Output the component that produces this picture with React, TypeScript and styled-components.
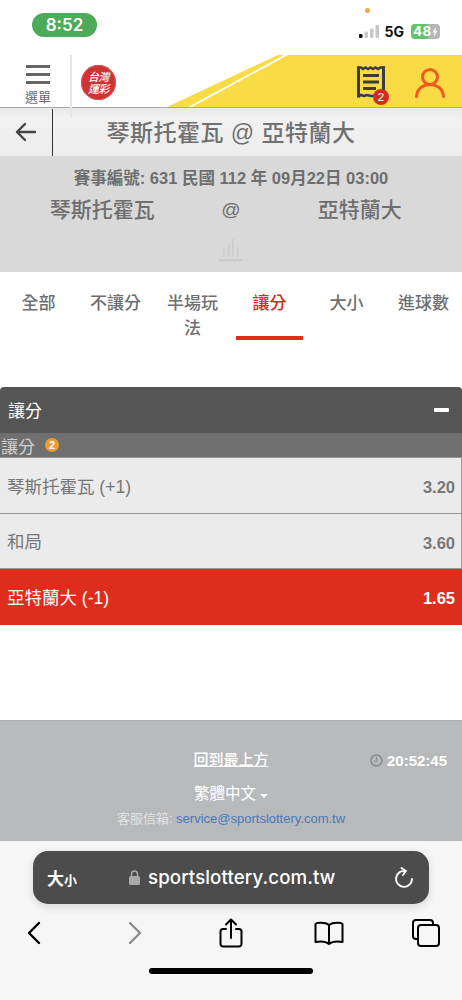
import React from "react";
import styled, { createGlobalStyle } from "styled-components";

const Global = createGlobalStyle`
  html, body { margin: 0; padding: 0; background: #fff; }
  * { box-sizing: border-box; }
  body { font-family: "Liberation Sans", "Noto Sans CJK TC", sans-serif; }
`;
const Page = styled.div`
  width: 462px; height: 1000px; overflow: hidden; display: flex; flex-direction: column; background: #fff;
`;
const StatusBar = styled.div`
  height: 55px; padding: 13px 22px 0 32px; display: flex; justify-content: space-between; align-items: flex-start;
`;
const TimePill = styled.div`
  width: 65px; height: 24px; border-radius: 12px; background: #4cab59; color: #fff;
  font: 600 17px/24px "Inter", sans-serif; text-align: center;
`;
const StatusRight = styled.div`
  position: relative; display: flex; align-items: center; gap: 6px; height: 34px; padding-top: 3px;
`;
const OrangeDot = styled.span`
  position: absolute; left: 6px; top: -5px; width: 5px; height: 5px; border-radius: 50%; background: #f3a544;
`;
const FiveG = styled.span`
  font: 700 14px/18px "Inter", sans-serif; color: #111; margin-right: 1px;
`;
const Battery = styled.div`
  width: 29px; height: 15px; border-radius: 4px; overflow: hidden; color: #fff; display: flex; align-items: center;
  font: 700 13.5px/15px "Inter", sans-serif; background: linear-gradient(90deg, #5fc46b 0 58%, #b5b5b5 58% 100%);
  padding-left: 2px; letter-spacing: 0.4px;
`;
const Header = styled.header`
  position: relative; height: 53px; display: flex; border-bottom: 1px solid #a9a9a9; background: #fff;
`;
const YellowBand = styled.svg`
  position: absolute; left: 0; top: 0; width: 462px; height: 52px;
`;
const MenuCell = styled.div`
  position: relative; width: 72px; height: 52px; flex: none; display: flex; flex-direction: column; align-items: center;
  padding: 10px 0 0 4px; color: #6c6c6c;
  &::after { content: ""; position: absolute; right: 0; top: 0; width: 2px; height: 63px; background: #e6e6e6; z-index: 3; }
`;
const Burger = styled.div`
  width: 24px; height: 19px; border-top: 3px solid #666; border-bottom: 3px solid #666; position: relative;
  &::before { content: ""; position: absolute; left: 0; right: 0; top: 5px; height: 3px; background: #666; }
`;
const MenuLabel = styled.span`
  font-size: 13px; line-height: 15px; margin-top: 6px;
`;
const LogoWrap = styled.div`
  position: relative; width: 35px; height: 35px; margin: 10px 0 0 9px; border-radius: 50%; background: #cf3232;
  color: #fff; font-size: 11px; line-height: 12px; font-weight: 500; font-style: italic; text-align: center;
  padding-top: 6px; letter-spacing: -0.5px; box-shadow: inset 0 0 0 1px #d95a5a;
`;
const HeaderIcons = styled.div`
  position: relative; margin-left: auto; display: flex; gap: 30px; padding: 11px 17px 0 0; align-items: flex-start;
`;
const BillWrap = styled.div`
  position: relative; width: 28px; height: 32px;
`;
const Badge = styled.span`
  position: absolute; right: -4px; bottom: -7px; width: 16px; height: 16px; border-radius: 50%; background: #d92a20;
  color: #fff; font: 400 11.5px/16px "Liberation Sans", sans-serif; text-align: center;
`;
const TitleBar = styled.div`
  height: 48px; display: flex; align-items: center; background: linear-gradient(#e9e9e9, #f1f1f1 20%, #ededed);
`;
const BackCell = styled.div`
  width: 53px; height: 47px; flex: none; border-right: 1.5px solid #333; display: flex; align-items: center; padding-left: 15px;
`;
const Title = styled.h1`
  margin: 2px 0 0 -53px; flex: 1; text-align: center; font-size: 23px; font-weight: 500; color: #707070; line-height: 46px;
  letter-spacing: 0.5px;
`;
const MatchInfo = styled.section`
  height: 116px; background: #d9d9d9; color: #6e6e6e; display: flex; flex-direction: column; align-items: center; padding-top: 12px;
`;
const MatchMeta = styled.div`
  font-size: 16.5px; font-weight: 700; line-height: 20px;
`;
const Teams = styled.div`
  width: 100%; padding: 0 38px; margin-top: 8px; display: grid; grid-template-columns: repeat(3, 1fr); text-align: center;
  font-size: 21px; font-weight: 500; line-height: 28px;
`;
const At = styled.span`
  font-size: 19px; font-weight: 400;
`;
const ChartIcon = styled.svg`
  margin-top: 14px;
`;
const Tabs = styled.nav`
  height: 115px; padding-top: 19px; display: grid; grid-template-columns: repeat(6, 77px); align-items: start;
`;
const Tab = styled.div<{ $active?: boolean }>`
  position: relative; height: 49px; padding: 0 8px; text-align: center; font-size: 17px; font-weight: 500; line-height: 25px;
  color: ${(p) => (p.$active ? "#d9281d" : "#6f6f6f")};
  ${(p) => p.$active && `&::after { content: ""; position: absolute; left: 5px; right: 5px; bottom: 0; height: 4px; background: #de2d1c; }`}
`;
const MarketHead = styled.div`
  height: 46px; background: #555; border-radius: 4px 4px 0 0; color: #fff; display: flex; justify-content: space-between;
  align-items: center; padding: 3px 13px 0 8px; font-size: 17px; line-height: 40px;
`;
const Minus = styled.span`
  width: 15px; height: 4px; border-radius: 1px; background: #fff; margin-top: -3px;
`;
const SubHead = styled.div`
  height: 25px; background: #6f6f6f; color: #d0d0d0; display: flex; align-items: center; padding-left: 1px; gap: 10px; font-size: 17px;
  border-bottom: 1px solid #999;
`;
const OrangeBadge = styled.span`
  width: 14px; height: 14px; border-radius: 50%; background: #ec9a34; color: #fff; font-size: 11px; font-weight: 700;
  line-height: 14px; text-align: center;
`;
const Row = styled.div<{ $selected?: boolean }>`
  height: 55.5px; display: flex; justify-content: space-between; align-items: center; padding: 0 6px 0 7px; font-size: 17.5px;
  background: ${(p) => (p.$selected ? "#de2d1c" : "#ebebeb")};
  color: ${(p) => (p.$selected ? "#fff" : "#777")};
  border-right: 1px solid ${(p) => (p.$selected ? "#de2d1c" : "#999")};
  border-bottom: 1px solid ${(p) => (p.$selected ? "#de2d1c" : "#999")};
`;
const Odds = styled.span`
  font-size: 16.5px; font-weight: 700; margin-top: 5px;
`;
const Spacer = styled.div`
  flex: 1;
`;
const Footer = styled.footer`
  height: 121px; background: #b8b9bb; border-top: 1px solid #b0b0b0; color: #fff; padding-top: 29px; display: flex; flex-direction: column; align-items: center;
`;
const FooterTop = styled.div`
  width: 100%; display: grid; grid-template-columns: 1fr auto 1fr; align-items: center; padding: 0 15px;
`;
const TopLink = styled.a`
  grid-column: 2; font-size: 15px; line-height: 20px; font-weight: 500; text-decoration: underline; color: #fff;
`;
const Clock = styled.div`
  justify-self: end; display: flex; align-items: center; gap: 4px; font-size: 15px; font-weight: 700;
`;
const LangRow = styled.div`
  margin-top: 13px; font-size: 15.5px; line-height: 22px; display: flex; align-items: center; gap: 4px;
`;
const Caret = styled.span`
  width: 0; height: 0; border-left: 4px solid transparent; border-right: 4px solid transparent; border-top: 4px solid #fff; margin-top: 3px;
`;
const Mail = styled.div`
  margin-top: 5px; font-size: 13px; line-height: 18px; color: #e2e2e2;
`;
const MailLink = styled.span`
  color: #4a7ab8;
`;
const Browser = styled.div`
  height: 159px; background: #f6f6f6; padding: 10px 33px 0; display: flex; flex-direction: column;
`;
const AddressBar = styled.div`
  height: 53px; flex: none; border-radius: 15px; background: #4c4c4c; color: #fff; display: flex; align-items: center;
  padding: 0 15px 0 14px; box-shadow: 0 3px 10px rgba(0,0,0,.12);
`;
const AA = styled.span`
  font-size: 17px; font-weight: 700; width: 82px;
  & small { font-size: 13px; }
`;
const Url = styled.span`
  flex: 1; display: flex; align-items: center; gap: 8px; font: 500 18.7px/24px "Inter", sans-serif; letter-spacing: 0.1px;
`;
const NavIcons = styled.div`
  margin: 13px -33px 0; height: 32px; padding-left: 26px; display: flex; align-items: center;
`;
const NavIcon = styled.svg<{ $gap: number }>`
  flex: none; margin-right: ${(p) => p.$gap}px;
`;
const HomeBar = styled.div`
  width: 164px; height: 6px; flex: none; align-self: center; margin-top: 19px; border-radius: 3px; background: #000;
`;

export default function App() {
  return (
    <Page>
      <Global />
      <StatusBar>
        <TimePill>8:52</TimePill>
        <StatusRight>
          <OrangeDot />
          <svg width="20" height="14" viewBox="0 0 20 14">
            <rect x="0" y="9" width="3.5" height="4" rx="1" fill="#111" />
            <rect x="5.5" y="6.5" width="3.5" height="6.5" rx="1" fill="#c8c8c8" />
            <rect x="11" y="3.5" width="3.5" height="9.5" rx="1" fill="#c8c8c8" />
            <rect x="16.5" y="0" width="3.5" height="13" rx="1" fill="#c8c8c8" />
          </svg>
          <FiveG>5G</FiveG>
          <Battery>
            48
            <svg width="6" height="10" viewBox="0 0 6 10" fill="#fff"><path d="M4 0 L0.5 5.5 H2.5 L1.8 10 L5.5 4 H3.5 Z" /></svg>
          </Battery>
        </StatusRight>
      </StatusBar>
      <Header>
        <YellowBand viewBox="0 0 462 52">
          <polygon points="167,52 278,0 462,0 462,52" fill="#f9dc45" />
          <polygon points="188,52 284,0 288,0 192,52" fill="#fff" />
        </YellowBand>
        <MenuCell>
          <Burger />
          <MenuLabel>選單</MenuLabel>
        </MenuCell>
        <LogoWrap>台灣<br />運彩</LogoWrap>
        <HeaderIcons>
          <BillWrap>
            <svg width="28" height="32" viewBox="0 0 28 32" fill="none" stroke="#3c3c3c">
              <path d="M1.5 0.5 V31.5 M26.5 0.5 V31.5" strokeWidth="3" />
              <path d="M0 1.5 H4 L6 3 L8.5 1.5 L11 3 L13.5 1.5 L16 3 L18.5 1.5 L21 3 L23.5 1.5 L28 1.5 M0 30 H2 L4 29 L7 30 L10 29 L14 30 H28" strokeWidth="2.6" />
              <path d="M6 9.5 H22 M6 16 H22 M6 22.5 H19" strokeWidth="3" />
            </svg>
            <Badge>2</Badge>
          </BillWrap>
          <svg width="30" height="30" viewBox="0 0 30 30" fill="none" stroke="#ee5a1f" strokeWidth="3" style={{ marginTop: 2 }}>
            <circle cx="15" cy="9" r="7.5" />
            <path d="M1.5 28.5 C2 21 8 16.5 15 16.5 C22 16.5 28 21 28.5 28.5" strokeLinecap="round" />
          </svg>
        </HeaderIcons>
      </Header>
      <TitleBar>
        <BackCell>
          <svg width="22" height="20" viewBox="0 0 22 20" fill="none" stroke="#444" strokeWidth="2.4" strokeLinecap="round" strokeLinejoin="round">
            <path d="M20 10 H2 M10 2 L2 10 L10 18" />
          </svg>
        </BackCell>
        <Title>琴斯托霍瓦 @ 亞特蘭大</Title>
      </TitleBar>
      <MatchInfo>
        <MatchMeta>賽事編號: 631 民國 112 年 09月22日 03:00</MatchMeta>
        <Teams>
          <span>琴斯托霍瓦</span>
          <At>@</At>
          <span>亞特蘭大</span>
        </Teams>
        <ChartIcon width="24" height="24" viewBox="0 0 24 24" fill="#cbcbcb">
          <rect x="0" y="21" width="24" height="2.5" />
          <rect x="4" y="11" width="1.6" height="8" />
          <rect x="9" y="6" width="1.6" height="13" />
          <rect x="13" y="1" width="1.6" height="18" />
          <rect x="18" y="9" width="1.6" height="10" />
        </ChartIcon>
      </MatchInfo>
      <Tabs>
        <Tab>全部</Tab>
        <Tab>不讓分</Tab>
        <Tab>半場玩法</Tab>
        <Tab $active>讓分</Tab>
        <Tab>大小</Tab>
        <Tab>進球數</Tab>
      </Tabs>
      <MarketHead>讓分<Minus /></MarketHead>
      <SubHead>讓分<OrangeBadge>2</OrangeBadge></SubHead>
      <Row>琴斯托霍瓦 (+1)<Odds>3.20</Odds></Row>
      <Row>和局<Odds>3.60</Odds></Row>
      <Row $selected>亞特蘭大 (-1)<Odds>1.65</Odds></Row>
      <Spacer />
      <Footer>
        <FooterTop>
          <TopLink>回到最上方</TopLink>
          <Clock>
            <svg width="13" height="13" viewBox="0 0 13 13" fill="none" stroke="#8b8b8b" strokeWidth="1.5">
              <circle cx="6.5" cy="6.5" r="5.5" />
              <path d="M6.5 3 V7 H3.5" strokeWidth="1.2" />
            </svg>
            20:52:45
          </Clock>
        </FooterTop>
        <LangRow>繁體中文<Caret /></LangRow>
        <Mail>客服信箱: <MailLink>service@sportslottery.com.tw</MailLink></Mail>
      </Footer>
      <Browser>
        <AddressBar>
          <AA>大<small>小</small></AA>
          <Url>
            <svg width="11" height="15" viewBox="0 0 11 15" fill="#a9a9a9">
              <rect x="0" y="6" width="11" height="9" rx="1.5" />
              <path d="M2.5 6 V4 a3 3 0 0 1 6 0 V6" fill="none" stroke="#a9a9a9" strokeWidth="1.4" />
            </svg>
            sportslottery.com.tw
          </Url>
          <svg width="20" height="22" viewBox="0 0 20 22" fill="none" stroke="#fff" strokeWidth="1.9" strokeLinecap="round" strokeLinejoin="round">
            <path d="M11.5 4 A8 8 0 1 0 18 12" />
            <path d="M7.5 1 L11.8 4 L9 8" />
          </svg>
        </AddressBar>
        <NavIcons>
          <NavIcon $gap={85} width="16" height="24" viewBox="0 0 16 24" fill="none" stroke="#000" strokeWidth="2.4" strokeLinecap="round" strokeLinejoin="round">
            <path d="M13 2 L3 12 L13 22" />
          </NavIcon>
          <NavIcon $gap={76} width="16" height="24" viewBox="0 0 16 24" fill="none" stroke="#8c8c8c" strokeWidth="2.4" strokeLinecap="round" strokeLinejoin="round">
            <path d="M3 2 L13 12 L3 22" />
          </NavIcon>
          <NavIcon $gap={71} width="24" height="30" viewBox="0 0 24 30" fill="none" stroke="#000" strokeWidth="2" strokeLinecap="round" strokeLinejoin="round">
            <path d="M7 11 H4 a2.5 2.5 0 0 0 -2.5 2.5 V26 A2.5 2.5 0 0 0 4 28.5 H20 a2.5 2.5 0 0 0 2.5 -2.5 V13.5 A2.5 2.5 0 0 0 20 11 H17" />
            <path d="M12 20 V2 M7 6.5 L12 1.5 L17 6.5" />
          </NavIcon>
          <NavIcon $gap={68} width="30" height="24" viewBox="0 0 30 24" fill="none" stroke="#000" strokeWidth="2" strokeLinecap="round" strokeLinejoin="round">
            <path d="M15 4 C12 1.5 7 1.5 3 2 L1.5 3 V21 C7 20 12 20.5 15 23 C18 20.5 23 20 28.5 21 V3 L27 2 C23 1.5 18 1.5 15 4 Z M15 4 V23" />
          </NavIcon>
          <NavIcon $gap={0} width="28" height="28" viewBox="0 0 28 28" fill="none" stroke="#000" strokeWidth="2" strokeLinejoin="round">
            <path d="M21 6 V4 a3 3 0 0 0 -3 -3 H4 a3 3 0 0 0 -3 3 V17 a3 3 0 0 0 3 3 H6" />
            <rect x="6" y="6" width="21" height="21" rx="3" />
          </NavIcon>
        </NavIcons>
        <HomeBar />
      </Browser>
    </Page>
  );
}
